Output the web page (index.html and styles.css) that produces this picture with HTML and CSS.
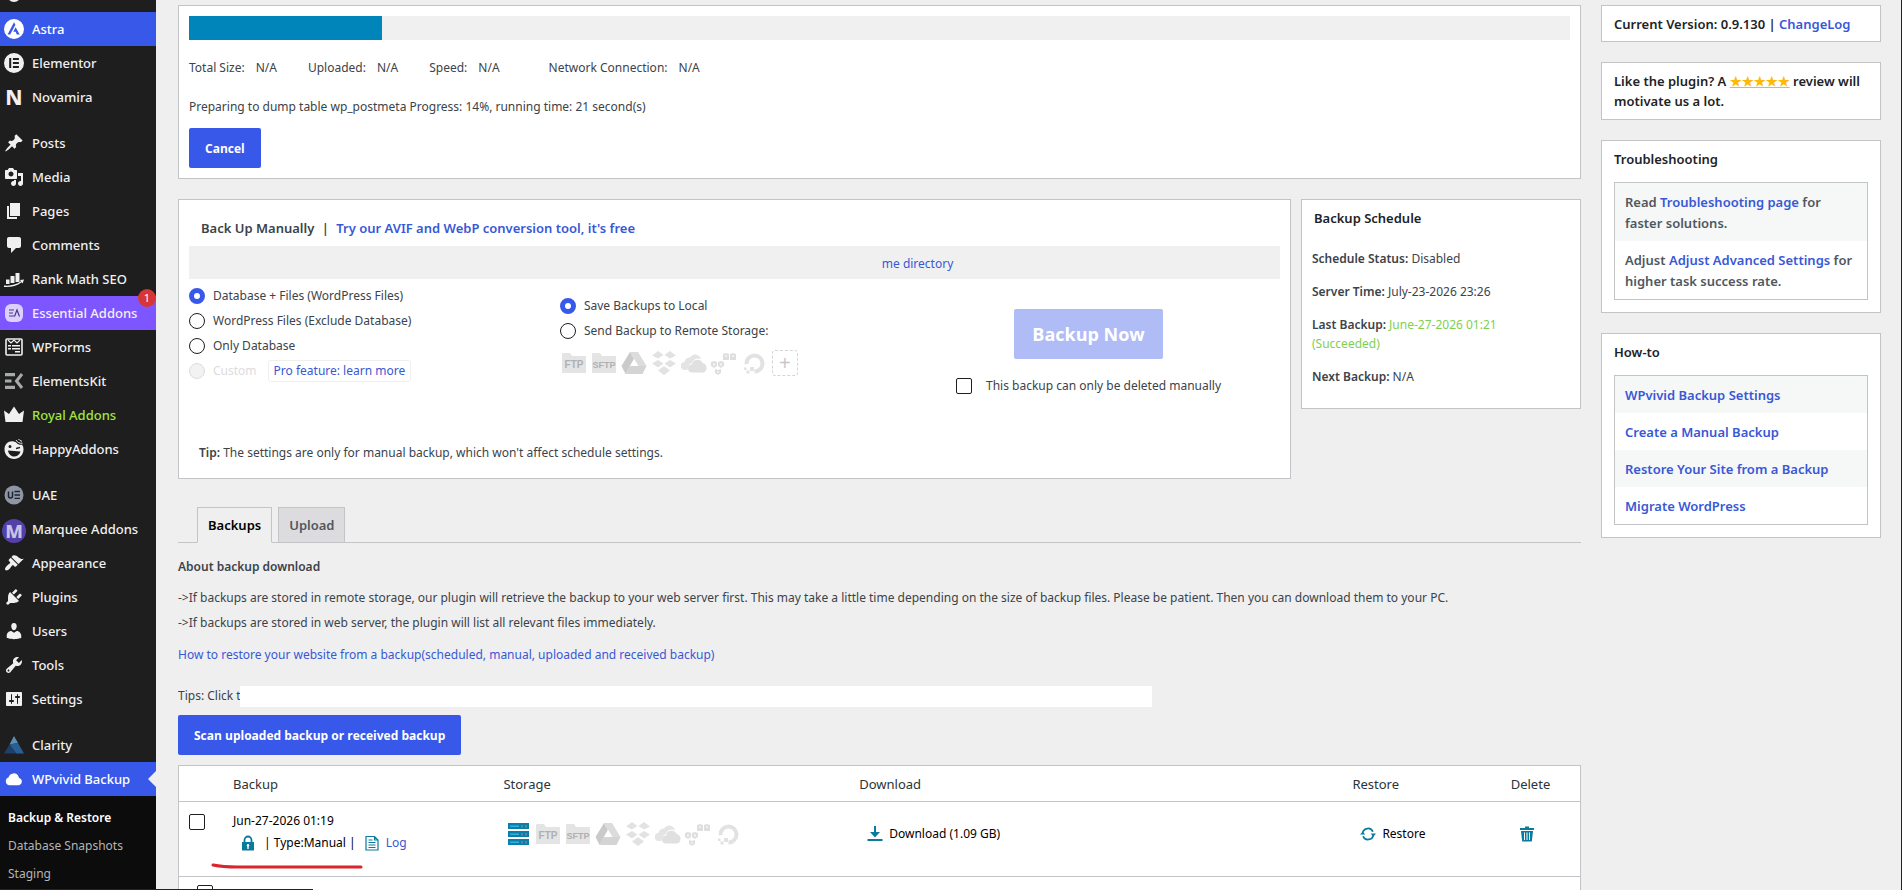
FILE: index.html
```
<!DOCTYPE html>
<html lang="en">
<head>
	<meta charset="UTF-8">
	<meta name="viewport" content="width=device-width, initial-scale=1.0">
	<title>WPvivid Backup</title>
	<link rel="stylesheet" href="styles.css">
</head>
<body>
	<!-- icon set -->
	<svg class="sprite" aria-hidden="true">
		<symbol id="i-dot" viewBox="0 0 20 20"><circle cx="10" cy="10" r="7"/></symbol>
		<symbol id="i-astra" viewBox="0 0 20 20"><path fill-rule="evenodd" d="M10 0a10 10 0 1 0 0 20 10 10 0 0 0 0-20zM10 3.2 3.6 15.600h2.6l5.200-9.800zM11.600 8.300l-2.300 4.500h2.400l1.100 2.800h2.900z"/></symbol>
		<symbol id="i-elementor" viewBox="0 0 20 20"><path fill-rule="evenodd" d="M10 0a10 10 0 1 0 0 20 10 10 0 0 0 0-20zM5.200 5h2v10h-2zM8.900 5h6v2h-6zM8.900 9h6v2h-6zM8.900 13h6v2h-6z"/></symbol>
		<symbol id="i-novamira" viewBox="0 0 20 20"><text x="10" y="17.5" text-anchor="middle" class="glyph-n">N</text></symbol>
		<symbol id="i-post" viewBox="0 0 20 20"><path d="M10.44 3.02l1.82-1.82 6.36 6.35-1.83 1.82c-1.05-.68-2.48-.57-3.41.36l-.75.75c-.92.93-1.04 2.35-.35 3.41l-1.83 1.82-2.41-2.41-2.8 2.79c-.42.42-3.38 2.71-3.8 2.29s1.86-3.39 2.28-3.81l2.79-2.79L4.1 9.36l1.83-1.82c1.05.69 2.48.57 3.4-.36l.75-.75c.93-.92 1.05-2.35.36-3.41z"/></symbol>
		<symbol id="i-media" viewBox="0 0 20 20"><path fill-rule="evenodd" d="M13 11V4c0-.55-.45-1-1-1h-1.67L9 1H5L3.67 3H2c-.55 0-1 .45-1 1v7c0 .55.45 1 1 1h10c.55 0 1-.45 1-1zM7 4.5c1.38 0 2.5 1.12 2.5 2.5S8.38 9.5 7 9.5 4.5 8.38 4.5 7 5.62 4.5 7 4.5zM14 6h5v10.5c0 1.38-1.12 2.5-2.5 2.5S14 17.88 14 16.5s1.12-2.5 2.5-2.5c.17 0 .34.02.5.05V9h-3V6zm-4 8.05V13h2v3.5c0 1.38-1.12 2.5-2.5 2.5S7 17.88 7 16.5 8.12 14 9.5 14c.17 0 .34.02.5.05z"/></symbol>
		<symbol id="i-page" viewBox="0 0 20 20"><path d="M6 15V2h10v13H6zm-1 1h8v2H3V5h2v11z"/></symbol>
		<symbol id="i-comment" viewBox="0 0 20 20"><path d="M5 2h10c1.1 0 2 .9 2 2v7c0 1.1-.9 2-2 2h-3l-5 5v-5H5c-1.1 0-2-.9-2-2V4c0-1.1.9-2 2-2z"/></symbol>
		<symbol id="i-rank" viewBox="0 0 20 20"><path d="M2 10.500h3.500V15H2zM6.500 7h4v7h-4zM11.500 4h4v9h-4z"/><path d="M0 16.500c6 .6 12-.5 17-4.200l-1-1.300 4-.5-1.400 3.900-.9-1.100C12.500 17.300 6 18.500 0 18z"/></symbol>
		<symbol id="i-ea" viewBox="0 0 20 20"><rect x="1" y="1" width="18" height="18" rx="6" fill="#dcd0ff"/><path d="M5 7h5M5 10h4M5 13h5M10.500 13.500 13 7l2.500 6.500" fill="none" stroke="#4a3a80" stroke-width="1.200"/></symbol>
		<symbol id="i-wpforms" viewBox="0 0 20 20"><rect x="2" y="2" width="16" height="16" rx="1" fill="none" stroke="currentColor" stroke-width="1.600"/><path d="M4 3l3 3 3-3 3 3 3-3" fill="none" stroke="currentColor" stroke-width="1.200"/><path d="M4 8h3v1.500H4zM8 8h8v1.500H8zM4 11h3v1.500H4zM8 11h8v1.500H8zM11 14h5v1.500h-5z"/></symbol>
		<symbol id="i-ekit" viewBox="0 0 20 20"><path d="M1 2h10v3.200H1zM1 8.400h6.500v3.200H1zM1 14.800h10V18H1z"/><path d="M18 3l-5.500 7 5.500 7" fill="none" stroke="currentColor" stroke-width="3"/></symbol>
		<symbol id="i-crown" viewBox="0 0 20 20"><path d="M0 5.500l5 3.500 5-7.500L15 9l5-3.500-1.500 11.500h-17z"/></symbol>
		<symbol id="i-happy" viewBox="0 0 20 20"><path fill-rule="evenodd" d="M12 3.200C6 .5.500 4 .5 10.500.5 16 5 20 10 20s9.500-4 9.500-9.500c0-2-.5-3.500-1.500-5-1 .8-4.500 0-6-2.300zM4.500 7.500a1.500 1.500 0 1 1 3 0 1.500 1.500 0 0 1-3 0zM12 8.800l4-1v1.500l-4 1zM4 11.500l12.500 1C15.500 16 13 17.500 10 17.500S4.500 15 4 11.500z"/><path d="M12 1c1.500 2.500 3.500 3.500 6.500 3.200M14.500 0c.8 1.200 2 2 3.500 2.300" fill="none" stroke="currentColor"/></symbol>
		<symbol id="i-uae" viewBox="0 0 20 20"><circle cx="10" cy="10" r="9.500" fill="#8e95a5"/><path d="M4.500 6.500V11a2 2 0 0 0 4 0V6.500" fill="none" stroke="#1d2430" stroke-width="1.500"/><path d="M10.500 6.500H16M10.500 10H16M10.500 13.300H16" stroke="#1d2430" stroke-width="1.300"/></symbol>
		<symbol id="i-marquee" viewBox="0 0 22 22"><circle cx="11" cy="11" r="11" fill="#5340a8"/><text x="11" y="17" text-anchor="middle" class="glyph-m">M</text></symbol>
		<symbol id="i-appearance" viewBox="0 0 20 20"><path d="M14.48 11.06L7.41 3.99l1.5-1.5c.5-.56 2.3-.47 3.51.32 1.21.8 1.43 1.28 2.91 2.1 1.18.64 2.45 1.26 4.45.85zm-.71.71L6.7 4.7 4.93 6.47c-.39.39-.39 1.02 0 1.41l1.06 1.06c.39.39.39 1.03 0 1.42-.6.6-1.43 1.11-2.21 1.69-.35.26-.7.53-1.01.84C1.43 14.23.4 16.08 1.4 17.07c.99 1 2.84-.03 4.18-1.36.31-.31.58-.66.85-1.02.57-.78 1.08-1.61 1.69-2.21.39-.39 1.02-.39 1.41 0l1.06 1.06c.39.39 1.02.39 1.41 0z"/></symbol>
		<symbol id="i-plugin" viewBox="0 0 20 20"><path d="M13.11 4.36L9.87 7.6 8 5.73l3.24-3.24c.35-.34 1.05-.2 1.56.32.52.51.66 1.21.31 1.55zm-8 1.77l.91-1.12 9.01 9.01-1.19.84c-.71.71-2.63 1.16-3.82 1.16H6.14L4.9 17.26c-.59.59-1.54.59-2.12 0-.59-.58-.59-1.53 0-2.12l1.24-1.24v-3.88c0-1.13.4-3.19 1.09-3.89zm7.26 3.97l3.24-3.24c.34-.35 1.04-.21 1.55.31.52.51.66 1.21.31 1.55l-3.24 3.25z"/></symbol>
		<symbol id="i-user" viewBox="0 0 20 20"><path d="M10 9.250c-2.270 0-2.730-3.440-2.730-3.440C7 4.020 7.820 2 9.970 2c2.160 0 2.980 2.020 2.710 3.810 0 0-.41 3.440-2.680 3.440zm0 2.570L12.720 10c2.390 0 4.520 2.330 4.520 4.530v2.490s-3.650 1.130-7.240 1.130c-3.650 0-7.240-1.130-7.240-1.130v-2.490c0-2.250 1.940-4.480 4.470-4.480z"/></symbol>
		<symbol id="i-tool" viewBox="0 0 20 20"><path fill-rule="evenodd" d="M16.68 9.77c-1.34 1.34-3.3 1.67-4.95.99l-5.41 6.52c-.99.99-2.59.99-3.58 0s-.99-2.59 0-3.57l6.52-5.42c-.68-1.65-.35-3.61.99-4.95 1.28-1.28 3.12-1.62 4.72-1.06l-2.89 2.89 2.82 2.82 2.86-2.87c.53 1.58.18 3.39-1.08 4.65zM3.81 16.210c.4.39 1.040.39 1.430 0 .4-.4.4-1.040 0-1.430-.39-.4-1.030-.4-1.430 0-.39.39-.39 1.030 0 1.430z"/></symbol>
		<symbol id="i-settings" viewBox="0 0 20 20"><path fill-rule="evenodd" d="M18 16V4c0-.55-.45-1-1-1H3c-.55 0-1 .45-1 1v12c0 .55.45 1 1 1h14c.55 0 1-.45 1-1zM8 11h1c.55 0 1 .45 1 1s-.45 1-1 1H8v1.500c0 .28-.22.5-.5.5s-.5-.22-.5-.5V13H6c-.55 0-1-.45-1-1s.45-1 1-1h1V5.500c0-.28.22-.5.5-.5s.5.22.5.5V11zm5-2h-1c-.55 0-1-.45-1-1s.45-1 1-1h1V5.500c0-.28.22-.5.5-.5s.5.22.5.5V7h1c.55 0 1 .45 1 1s-.45 1-1 1h-1v5.500c0 .28-.22.5-.5.5s-.5-.22-.5-.5V9z"/></symbol>
		<symbol id="i-clarity" viewBox="0 0 20 20"><path d="M10 1l4 7-8.500 1.500z" fill="#5d8fb4"/><path d="M5.500 9.500L14 8l6 10.500H12z" fill="#2a5f95"/><path d="M5.500 9.500l6.500 9H0z" fill="#1d3f6a"/></symbol>
		<symbol id="i-cloud" viewBox="0 0 20 20"><path d="M15 9a3.700 3.700 0 0 1 0 7.200H5A4 4 0 0 1 4.500 8.500 5.300 5.300 0 0 1 14.500 7.500c.2.500.4 1 .5 1.500z"/></symbol>
		<symbol id="i-ftp" viewBox="0 0 26 26"><path d="M1 4q0-1 1-1h7l2 3h13q1 0 1 1v16H1z" fill="#e4e4e4"/><text x="13" y="18" text-anchor="middle" class="glyph-ftp">FTP</text></symbol>
		<symbol id="i-sftp" viewBox="0 0 26 26"><path d="M1 4q0-1 1-1h7l2 3h13q1 0 1 1v16H1z" fill="#e4e4e4"/><text x="13" y="18" text-anchor="middle" class="glyph-sftp">SFTP</text></symbol>
		<symbol id="i-drive" viewBox="0 0 26 26"><path d="M9 2h8l8.500 14h-8z" fill="#dcdcdc"/><path d="M9 2l4 7L4.500 24 .5 16z" fill="#cacaca"/><path d="M8.500 16h17l-4 8h-17z" fill="#d4d4d4"/><path d="M13 9l4 7H9z" fill="#fff"/></symbol>
		<symbol id="i-dropbox" viewBox="0 0 26 26"><path d="M7 1l5.500 4L7 8.500 1 5.500zM19 1l6 4.500-6 3L13.500 5zM1 13.500l6-3.500 5.500 3.500L7 17.500zM25 13.500L19 10l-5.500 3.500 5.500 4zM7 20.500l6-4.500 6 4.500-6 4.500z" fill="#e2e2e2"/></symbol>
		<symbol id="i-onedrive" viewBox="0 0 26 26"><path d="M7.500 20H4a4 4 0 0 1-.5-8A5.500 5.500 0 0 1 9 7.500 6 6 0 0 1 19 7q1 1 1 2-7-2-9 4-4 1-4.500 7z" fill="#e4e4e4"/><path d="M11 22.500a4 4 0 0 1 0-8 5.500 5.500 0 0 1 10.500-1.500 5 5 0 0 1 1 9.500z" fill="#e0e0e0"/></symbol>
		<symbol id="i-s3" viewBox="0 0 26 26"><path d="M0 12l3-1 3 1v4l-3 2-3-2zM7 12l3-1 3 1v4l-3 2-3-2zM4 19l3 1 3-1v4l-3 2-3-2zM12 4l3-1 3 1v6h-6zM19 4l3-1 3 1v6h-6z" fill="#dedede"/><path d="M3 13v3M10 13v3M7 21v2M15 5v2M22 5v2" stroke="#fff"/></symbol>
		<symbol id="i-ocean" viewBox="0 0 26 26"><path d="M5.500 14a8 8 0 1 1 8 7.500" fill="none" stroke="#e2e2e2" stroke-width="4"/><path d="M9 17h4v4H9zM5.500 20.500h3v3h-3zM3 17.500h2.500V20H3z" fill="#e2e2e2"/></symbol>
		<symbol id="i-server" viewBox="0 0 26 26"><path d="M3 2h21v6H3zM3 10h21v6H3zM3 18h21v6H3z" fill="#0a7fab"/><path d="M5 4.500h9v1.500H5zM5 12.500h9V14H5zM5 20.500h9V22H5z" fill="#35b0e0"/><path d="M16 4h2v2.500h-2zM20 4h2v2.500h-2zM16 12h2v2.500h-2zM20 12h2v2.500h-2zM16 20h2v2.500h-2zM20 20h2v2.500h-2z" fill="#5d8496"/></symbol>
		<symbol id="i-lock" viewBox="0 0 16 16"><path d="M4.500 7V5a3.500 3.500 0 0 1 7 0v2" fill="none" stroke="currentColor" stroke-width="1.800"/><path fill-rule="evenodd" d="M2 7h12v8.500H2zM8 9a1.300 1.300 0 0 0-.7 2.400V14h1.400v-2.600A1.300 1.300 0 0 0 8 9z"/></symbol>
		<symbol id="i-log" viewBox="0 0 16 16"><path d="M2 1.500h8.500L14 5v10H2zM10.500 1.500V5H14M4.500 5h4M4.500 7.500h7M4.500 10h7M4.500 12.500h7" fill="none" stroke="currentColor" stroke-width="1.200"/></symbol>
		<symbol id="i-download" viewBox="0 0 16 16"><path d="M7 0h2v6h4l-5 5.500L3 6h4zM.5 13h15v2H.5z"/></symbol>
		<symbol id="i-restore" viewBox="0 0 18 18"><path d="M3 8a6 6 0 0 1 11.500-1.500M15 10A6 6 0 0 1 3.500 11.500" fill="none" stroke="currentColor" stroke-width="2"/><path d="M0 9.500L3 6.500l3 3zM12 8.500h6l-3 3.500z"/></symbol>
		<symbol id="i-trash" viewBox="0 0 16 16"><path fill-rule="evenodd" d="M6 .5h4V2h5v2H1V2h5zM2 5h12l-1.200 10.500H3.200zM5 6.500V14h1V6.500zM7.500 6.500V14h1V6.500zM10 6.500V14h1V6.500z"/></symbol>
	</svg>

	<div class="page">
		<nav class="menu">
			<ul>
				<li><a href="#"><svg><use href="#i-dot"/></svg></a></li>
				<li class="active"><a href="#"><svg><use href="#i-astra"/></svg>Astra</a></li>
				<li><a href="#"><svg><use href="#i-elementor"/></svg>Elementor</a></li>
				<li><a href="#"><svg><use href="#i-novamira"/></svg>Novamira</a></li>
				<li class="first"><a href="#"><svg><use href="#i-post"/></svg>Posts</a></li>
				<li><a href="#"><svg><use href="#i-media"/></svg>Media</a></li>
				<li><a href="#"><svg><use href="#i-page"/></svg>Pages</a></li>
				<li><a href="#"><svg><use href="#i-comment"/></svg>Comments</a></li>
				<li><a href="#"><svg><use href="#i-rank"/></svg>Rank Math SEO</a></li>
				<li class="essential"><a href="#"><svg><use href="#i-ea"/></svg>Essential Addons</a><span class="badge">1</span></li>
				<li><a href="#"><svg><use href="#i-wpforms"/></svg>WPForms</a></li>
				<li class="dim"><a href="#"><svg><use href="#i-ekit"/></svg>ElementsKit</a></li>
				<li class="royal"><a href="#"><svg><use href="#i-crown"/></svg>Royal Addons</a></li>
				<li><a href="#"><svg><use href="#i-happy"/></svg>HappyAddons</a></li>
				<li class="first"><a href="#"><svg><use href="#i-uae"/></svg>UAE</a></li>
				<li><a href="#"><svg class="big"><use href="#i-marquee"/></svg>Marquee Addons</a></li>
				<li><a href="#"><svg><use href="#i-appearance"/></svg>Appearance</a></li>
				<li><a href="#"><svg><use href="#i-plugin"/></svg>Plugins</a></li>
				<li><a href="#"><svg><use href="#i-user"/></svg>Users</a></li>
				<li><a href="#"><svg><use href="#i-tool"/></svg>Tools</a></li>
				<li><a href="#"><svg><use href="#i-settings"/></svg>Settings</a></li>
				<li class="first"><a href="#"><svg><use href="#i-clarity"/></svg>Clarity</a></li>
				<li class="active current"><a href="#"><svg><use href="#i-cloud"/></svg>WPvivid Backup</a></li>
			</ul>
			<ul class="submenu">
				<li class="selected"><a href="#">Backup &amp; Restore</a></li>
				<li><a href="#">Database Snapshots</a></li>
				<li><a href="#">Staging</a></li>
			</ul>
		</nav>

		<div class="content">
			<main>
				<section class="box progress-box">
					<div class="progress"><div class="progress-bar" style="width: 14%"></div></div>
					<div class="stats">
						<span>Total Size:<b>N/A</b></span>
						<span>Uploaded:<b>N/A</b></span>
						<span class="speed">Speed:<b>N/A</b></span>
						<span>Network Connection:<b>N/A</b></span>
					</div>
					<p>Preparing to dump table wp_postmeta Progress: 14%, running time: 21 second(s)</p>
					<button class="btn" type="button">Cancel</button>
				</section>

				<div class="backup-row">
					<section class="box manual">
						<h2>Back Up Manually <i>|</i> <a href="#">Try our AVIF and WebP conversion tool, it's free</a></h2>
						<div class="directory"><a href="#">me directory</a></div>
						<div class="options">
							<div class="what">
								<label><input type="radio" name="what" checked>Database + Files (WordPress Files)</label>
								<label><input type="radio" name="what">WordPress Files (Exclude Database)</label>
								<label><input type="radio" name="what">Only Database</label>
								<div class="custom">
									<label><input type="radio" name="what" disabled>Custom</label>
									<a class="pro" href="#">Pro feature: learn more</a>
								</div>
							</div>
							<div class="where">
								<label><input type="radio" name="where" checked>Save Backups to Local</label>
								<label><input type="radio" name="where">Send Backup to Remote Storage:</label>
								<div class="icons">
									<svg><use href="#i-ftp"/></svg>
									<svg><use href="#i-sftp"/></svg>
									<svg><use href="#i-drive"/></svg>
									<svg><use href="#i-dropbox"/></svg>
									<svg><use href="#i-onedrive"/></svg>
									<svg><use href="#i-s3"/></svg>
									<svg><use href="#i-ocean"/></svg>
									<button class="add" type="button" aria-label="Add storage">+</button>
								</div>
							</div>
							<div class="run">
								<button class="btn big-btn" type="button">Backup Now</button>
								<label><input type="checkbox">This backup can only be deleted manually</label>
							</div>
						</div>
						<p class="tip"><strong>Tip:</strong> The settings are only for manual backup, which won't affect schedule settings.</p>
					</section>

					<section class="box schedule">
						<h2>Backup Schedule</h2>
						<p><strong>Schedule Status:</strong> Disabled</p>
						<p><strong>Server Time:</strong> July-23-2026 23:26</p>
						<p><strong>Last Backup:</strong> <span class="ok">June-27-2026 01:21 (Succeeded)</span></p>
						<p><strong>Next Backup:</strong> N/A</p>
					</section>
				</div>

				<div class="tabs">
					<a class="tab tab-active" href="#">Backups</a>
					<a class="tab" href="#">Upload</a>
				</div>

				<section class="about">
					<h3>About backup download</h3>
					<p>-&gt;If backups are stored in remote storage, our plugin will retrieve the backup to your web server first. This may take a little time depending on the size of backup files. Please be patient. Then you can download them to your PC.</p>
					<p>-&gt;If backups are stored in web server, the plugin will list all relevant files immediately.</p>
					<p class="how"><a href="#">How to restore your website from a backup(scheduled, manual, uploaded and received backup)</a></p>
					<div class="tips"><span>Tips: Click t</span><div class="blank"></div></div>
					<button class="btn" type="button">Scan uploaded backup or received backup</button>
				</section>

				<table class="backups">
					<colgroup>
						<col class="c-check"><col class="c-backup"><col class="c-storage"><col class="c-download"><col class="c-restore"><col>
					</colgroup>
					<thead>
						<tr><th></th><th>Backup</th><th>Storage</th><th>Download</th><th>Restore</th><th>Delete</th></tr>
					</thead>
					<tbody>
						<tr>
							<td class="pick"><input type="checkbox" aria-label="Select backup"></td>
							<td class="info">
								<div>Jun-27-2026 01:19</div>
								<div class="meta"><svg><use href="#i-lock"/></svg><span>| Type:Manual |</span><svg><use href="#i-log"/></svg><a href="#">Log</a></div>
								<svg class="underline" viewBox="0 0 152 6"><path d="M2 2q10 2 24 2H150" fill="none" stroke="#d9262c" stroke-width="3" stroke-linecap="round"/></svg>
							</td>
							<td>
								<div class="icons">
									<svg><use href="#i-server"/></svg>
									<svg><use href="#i-ftp"/></svg>
									<svg><use href="#i-sftp"/></svg>
									<svg><use href="#i-drive"/></svg>
									<svg><use href="#i-dropbox"/></svg>
									<svg><use href="#i-onedrive"/></svg>
									<svg><use href="#i-s3"/></svg>
									<svg><use href="#i-ocean"/></svg>
								</div>
							</td>
							<td><a class="act" href="#"><svg><use href="#i-download"/></svg>Download (1.09 GB)</a></td>
							<td><a class="act" href="#"><svg><use href="#i-restore"/></svg>Restore</a></td>
							<td><a class="act" href="#" aria-label="Delete"><svg><use href="#i-trash"/></svg></a></td>
						</tr>
						<tr class="foot">
							<td class="pick"><input type="checkbox" aria-label="Select all"></td>
							<td colspan="5"></td>
						</tr>
					</tbody>
				</table>
			</main>

			<aside>
				<div class="box note">Current Version: 0.9.130 | <a href="#">ChangeLog</a></div>
				<div class="box note review">Like the plugin? A <a class="stars" href="#">★★★★★</a> review will motivate us a lot.</div>
				<div class="box list-box">
					<h2>Troubleshooting</h2>
					<ul>
						<li>Read <a href="#">Troubleshooting page</a> for faster solutions.</li>
						<li>Adjust <a href="#">Adjust Advanced Settings</a> for higher task success rate.</li>
					</ul>
				</div>
				<div class="box list-box">
					<h2>How-to</h2>
					<ul>
						<li><a href="#">WPvivid Backup Settings</a></li>
						<li><a href="#">Create a Manual Backup</a></li>
						<li><a href="#">Restore Your Site from a Backup</a></li>
						<li><a href="#">Migrate WordPress</a></li>
					</ul>
				</div>
			</aside>
		</div>
	</div>
	<div class="statusline"></div>
</body>
</html>
```
FILE: styles.css
```
* {
    box-sizing: border-box;
}

body {
    margin: 0;
    font-family: "Noto Sans", "Open Sans", sans-serif;
    font-size: 12px;
    line-height: 20px;
    color: #3c434a;
    background-color: #efefef;
}

h2, h3, p, ul {
    margin: 0;
    padding: 0;
}

ul {
    list-style: none;
}

a {
    color: #3858d6;
    text-decoration: none;
}

strong {
    font-weight: 600;
}

svg {
    fill: currentColor;
    flex: none;
}

.sprite {
    display: none;
}

.page {
    display: flex;
    height: 100vh;
    overflow: hidden;
    border-right: 1px solid #1d2327;
}

/* Left admin menu */
.menu {
    flex: 0 0 156px;
    display: flex;
    flex-direction: column;
    margin-top: -22px;
    background-color: #1e1e1e;
}

.menu li {
    position: relative;
}

.menu li a {
    display: flex;
    align-items: center;
    gap: 8px;
    height: 34px;
    padding-left: 4px;
    font-size: 13px;
    font-weight: 500;
    color: #f0f0f1;
    white-space: nowrap;
}

.menu svg {
    width: 20px;
    height: 20px;
}

.menu svg.big {
    width: 24px;
    height: 24px;
    margin: 4px -2px 0;
}

.menu .first {
    margin-top: 12px;
}

.menu .active a {
    background-color: #3858e9;
    color: #fff;
}

.menu .essential a {
    background-color: #7e56ff;
}

.menu .royal a {
    color: #a2e53f;
}

.menu .royal svg {
    color: #f0f0f1;
}

.menu .dim svg {
    color: #a7aaad;
}

.badge {
    position: absolute;
    top: -7px;
    right: 0;
    width: 18px;
    height: 18px;
    border-radius: 50%;
    background-color: #d63638;
    color: #fff;
    font-size: 11px;
    line-height: 18px;
    text-align: center;
}

/* arrow pointing at the page */
.menu .current::after {
    content: "";
    position: absolute;
    top: 9px;
    right: 0;
    border: 8px solid transparent;
    border-right-color: #efefef;
    border-left: 0;
}

.menu .submenu {
    flex: 1;
    padding-top: 8px;
    background-color: #0c0c0c;
}

.menu .submenu a {
    height: 28px;
    padding-left: 8px;
    font-size: 12px;
    font-weight: 400;
    color: #b5b5b6;
}

.menu .submenu .selected a {
    font-weight: 600;
    color: #fff;
}

.glyph-n {
    font-size: 21px;
    font-weight: 800;
}

.glyph-m {
    font-size: 17px;
    font-weight: 800;
    fill: #c9c2e6;
}

.glyph-ftp, .glyph-sftp {
    font-family: "Liberation Sans", sans-serif;
    font-size: 10px;
    font-weight: bold;
    fill: #b0b0b0;
}

.glyph-sftp {
    font-size: 9px;
}

/* Page area */
.content {
    flex: 1;
    display: grid;
    grid-template-columns: minmax(0, 1fr) 280px;
    gap: 20px;
    align-items: start;
    padding: 5px 20px 0 22px;
}

.box {
    background-color: #fff;
    border: 1px solid #c3c4c7;
}

.btn {
    height: 40px;
    padding: 0 16px;
    border: 0;
    border-radius: 2px;
    background-color: #3858e9;
    color: #fff;
    font-family: "Open Sans", sans-serif;
    font-size: 12px;
    font-weight: 700;
    cursor: pointer;
}

input[type="radio"], input[type="checkbox"] {
    appearance: none;
    flex: none;
    width: 16px;
    height: 16px;
    margin: 0 8px 0 0;
    border: 1px solid #1e1e1e;
    border-radius: 50%;
    background-color: #fff;
}

input[type="checkbox"] {
    border-radius: 2px;
}

input[type="radio"]:checked {
    border: 5px solid #3858e9;
}

input[type="radio"]:disabled {
    border-color: #dcdcde;
    background-color: #f2f2f2;
}

label {
    display: flex;
    align-items: center;
    height: 25px;
}

/* Progress */
.progress-box {
    padding: 10px;
}

.progress {
    height: 24px;
    background-color: #f0f0f0;
}

.progress-bar {
    height: 24px;
    background-color: #0085ba;
}

.stats {
    display: flex;
    gap: 31px;
    margin-top: 18px;
}

.stats b {
    margin-left: 11px;
    font-weight: 400;
}

.stats .speed {
    margin-right: 18px;
}

.progress-box p {
    margin: 19px 0 11px;
}

/* Manual backup + schedule */
.backup-row {
    display: flex;
    align-items: flex-start;
    gap: 10px;
    margin-top: 20px;
}

.manual {
    flex: 1;
    padding: 0 10px;
}

.box h2 {
    font-size: 13px;
    font-weight: 600;
    color: #1d2327;
}

.manual h2 {
    padding: 18px 12px 8px;
    color: #3c434a;
}

.manual h2 i {
    margin: 0 4px;
    font-style: normal;
}

.directory {
    height: 33px;
    padding-left: 63.5%;
    line-height: 35px;
    background-color: #f0f0f0;
}

.options {
    display: grid;
    grid-template-columns: 34% 32% 34%;
    min-height: 161px;
}

.what {
    padding-top: 4px;
}

.custom {
    display: flex;
    align-items: center;
    gap: 11px;
}

.custom label {
    color: #dcdcde;
}

.pro {
    padding: 0 5px;
    border: 1px solid #efeff0;
    border-radius: 3px;
}

.where {
    padding-top: 14px;
}

.icons {
    display: flex;
    align-items: center;
    gap: 4px;
}

.icons svg {
    width: 26px;
    height: 26px;
}

.where .icons {
    padding: 7px 0 0 1px;
}

.add {
    width: 26px;
    height: 26px;
    margin-left: 1px;
    padding: 0;
    border: 1px dashed #d5d5d5;
    border-radius: 3px;
    background-color: #fff;
    color: #c8c8c8;
    font-size: 20px;
    line-height: 20px;
}

.run {
    display: flex;
    flex-direction: column;
    align-items: center;
    padding: 30px 12px 0 0;
}

.run label {
    margin-top: 14px;
}

.run input[type="checkbox"] {
    margin-right: 14px;
}

.big-btn {
    height: 50px;
    padding: 0 18px;
    background-color: #afbcf6;
    font-size: 18px;
}

.tip {
    padding: 3px 10px 15px;
}

.schedule {
    flex: 0 0 280px;
    padding: 8px 24px 8px 10px;
}

.schedule h2 {
    padding: 0 2px;
    margin-bottom: 21px;
}

.schedule p {
    margin-bottom: 14px;
    line-height: 19px;
}

.ok {
    color: #7fcf4f;
}

/* Tabs */
.tabs {
    display: flex;
    gap: 6px;
    height: 36px;
    margin-top: 28px;
    padding-left: 19px;
    border-bottom: 1px solid #c3c4c7;
}

.tab {
    height: 36px;
    padding: 0 10px;
    border: 1px solid #c3c4c7;
    background-color: #dcdcde;
    color: #50575e;
    font-size: 13px;
    font-weight: 600;
    line-height: 35px;
}

.tab-active {
    border-bottom-color: #efefef;
    background-color: #efefef;
    color: #000;
}

.about {
    padding-top: 14px;
}

.about h3 {
    margin-bottom: 11px;
    font-size: 12px;
    font-weight: 600;
}

.about p {
    margin-bottom: 5px;
}

.about .how {
    margin: 12px 0 21px;
}

.tips {
    display: flex;
    height: 21px;
    margin-bottom: 8px;
}

.tips span {
    flex: 0 0 62px;
    overflow: hidden;
    white-space: nowrap;
}

.blank {
    flex: 0 1 65%;
    background-color: #fff;
}

/* Backup list */
.backups {
    width: 100%;
    margin-top: 10px;
    table-layout: fixed;
    border: 1px solid #c3c4c7;
    border-spacing: 0;
    background-color: #fff;
    color: #000;
}

.backups .c-check {
    width: 44px;
}

.backups .c-backup {
    width: 19.3%;
}

.backups .c-storage {
    width: 25.4%;
}

.backups .c-download {
    width: 35.2%;
}

.backups .c-restore {
    width: 11.3%;
}

.backups th {
    height: 36px;
    padding: 0 10px;
    border-bottom: 1px solid #c3c4c7;
    color: #2c3338;
    font-size: 13px;
    font-weight: 400;
    text-align: left;
}

.backups td {
    height: 75px;
    padding: 5px 10px 15px;
    border-bottom: 1px solid #c3c4c7;
}

.backups .pick {
    padding: 12px 10px;
    vertical-align: top;
}

.backups .pick input {
    display: block;
}

.backups .info {
    position: relative;
    padding: 9px 10px 0;
    vertical-align: top;
}

.meta {
    display: flex;
    align-items: center;
    height: 24px;
    padding-left: 7px;
}

.meta svg, .act svg {
    width: 16px;
    height: 16px;
    color: #0a7a9e;
}

.meta span {
    margin: 0 8px;
}

.meta a {
    margin-left: 6px;
}

/* hand drawn mark over the row */
.underline {
    position: absolute;
    left: -12px;
    bottom: 7px;
    width: 152px;
    height: 6px;
}

.act {
    display: flex;
    align-items: center;
    gap: 6px;
    padding-left: 8px;
    color: #000;
}

.backups td .icons {
    padding-left: 2px;
}

.backups .foot .pick {
    padding: 8px 18px;
}

/* Right column */
aside {
    display: flex;
    flex-direction: column;
    gap: 20px;
    font-size: 13px;
    font-weight: 600;
    color: #1d2327;
}

.note {
    padding: 8px 12px 7px;
}

.review {
    padding-bottom: 8px;
}

.list-box {
    padding: 8px 12px 12px;
}

.list-box h2 {
    margin-bottom: 13px;
}

.list-box ul {
    border: 1px solid #c3c4c7;
}

.list-box li {
    padding: 9px 10px 7px;
    line-height: 21px;
    color: #50575e;
}

.list-box li:nth-child(odd) {
    background-color: #f6f7f7;
}

.stars {
    color: #ffb900;
    text-decoration: underline;
}

.statusline {
    position: absolute;
    left: 0;
    bottom: 0;
    width: 313px;
    height: 1px;
    background-color: #1d2327;
}
```
